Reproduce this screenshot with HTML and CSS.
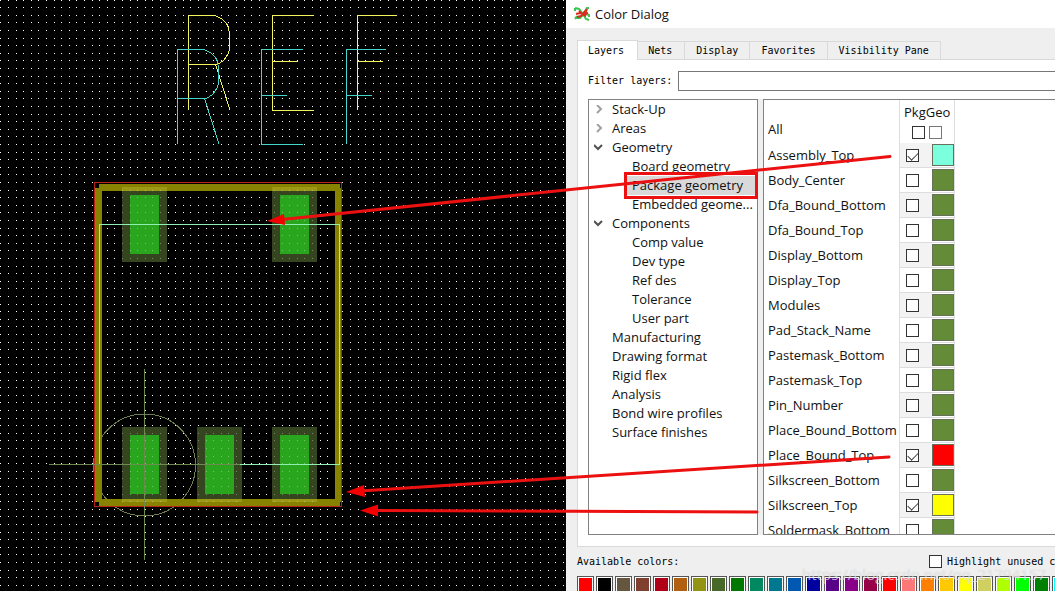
FILE: index.html
```
<!DOCTYPE html>
<html lang="en">
<head>
<meta charset="utf-8">
<title>Color Dialog</title>
<link rel="stylesheet" href="styles.css">
</head>
<body>
<main class="workspace">
  <section class="board" aria-label="Package drawing">
    <svg class="drawing" width="566" height="591" shape-rendering="crispEdges">
      <defs>
        <g id="dot-row">
          <path d="M0 0h1v1h-1zM8 0h1v1h-1zM15 0h1v1h-1zM23 0h1v1h-1zM30 0h1v1h-1z"/>
        </g>
        <pattern id="grid" x="8" y="7" width="38" height="38" patternUnits="userSpaceOnUse">
          <g fill="#fff">
            <use href="#dot-row"/><use href="#dot-row" y="8"/><use href="#dot-row" y="15"/><use href="#dot-row" y="23"/><use href="#dot-row" y="31"/>
          </g>
        </pattern>
        <g id="pad">
          <rect width="45" height="75" fill="#35451f"/>
          <rect x="8" y="8" width="29" height="59" fill="#2aa51e"/>
        </g>
        <g id="ref" fill="none">
          <path d="M11.500 95V.5h26l7 3 5 5 2 4 1 7v14l-1 5-5 7-6 4h-29M38.500 49.500l14.500 45.500"/>
          <path d="M137 .5H95.500v95H137M95.500 46.500h25M220 .5h-39.500V95M180.500 46.500h25"/>
        </g>
      </defs>
      <rect width="566" height="591" fill="#000"/>
      <rect width="566" height="591" fill="url(#grid)"/>
      <use href="#ref" x="177" y="15" stroke="#f4f45e"/>
      <use href="#ref" x="166" y="49" stroke="#45d6cb"/>
      <circle cx="144.500" cy="465" r="51" fill="none" stroke="#6f7f50"/>
      <use href="#pad" x="122" y="187"/><use href="#pad" x="272" y="187"/>
      <use href="#pad" x="122" y="427"/><use href="#pad" x="197" y="427"/><use href="#pad" x="272" y="427"/>
      <path d="M99 184h241v7H99zM95 188h7v314h-7zM335 188h7v314h-7zM99 499h241v7H99z" fill="#878200"/>
      <path d="M122 187h45v4h-45zM272 187h45v4h-45zM122 499h45v3h-45zM197 499h45v3h-45zM272 499h45v3h-45z" fill="#9b9816"/>
      <path d="M122 187h45v75h-45zM272 187h45v75h-45zM122 427h45v75h-45zM197 427h45v75h-45zM272 427h45v75h-45z" fill="url(#grid)" opacity=".35"/>
      <rect x="94.500" y="182.500" width="247" height="324" fill="none" stroke="#b82218"/>
      <path d="M49 464.500h191M144.500 369v191" stroke="#6f8a50"/>
      <path d="M99.500 464V224.500h240v240H240" fill="none" stroke="#8ff0b4"/>
    </svg>
  </section>

  <section class="dialog" aria-label="Color Dialog">
    <header class="titlebar">
      <svg class="app-icon" width="16" height="16" viewBox="0 0 16 16" fill="none">
        <path d="M1 2l4 1 4 5 3 5 3 1M1 2v3M1 12h5l3-3 4-7h2M3 10l-2 3M12 8l3 1v2" stroke="#3cc552" stroke-width="2"/>
        <path d="M2 8l4-1 3 1 4-5M3 11l4-1 4-5M5 5l3 3 4 2M13 3l-2 5 3-1" stroke="#dc2a20" stroke-width="2"/>
      </svg>
      <h1>Color Dialog</h1>
    </header>
    <div class="content">
      <div class="tabs" role="tablist">
        <button class="tab selected" role="tab" aria-selected="true">Layers</button>
        <button class="tab" role="tab">Nets</button>
        <button class="tab" role="tab">Display</button>
        <button class="tab" role="tab">Favorites</button>
        <button class="tab" role="tab">Visibility Pane</button>
      </div>
      <div class="panel">
        <div class="filter">
          <label for="filter">Filter layers:</label>
          <input id="filter" type="text">
        </div>
        <div class="panes">
          <ul class="tree">
            <li><button><svg class="arrow" viewBox="0 0 9 9"><path d="M3 0l4 4-4 4"/></svg>Stack-Up</button></li>
            <li><button><svg class="arrow" viewBox="0 0 9 9"><path d="M3 0l4 4-4 4"/></svg>Areas</button></li>
            <li><button><svg class="arrow open" viewBox="0 0 9 9"><path d="M0 2l4 4 4-4"/></svg>Geometry</button>
              <ul>
                <li><button>Board geometry</button></li>
                <li><button class="current">Package geometry</button></li>
                <li><button>Embedded geome...</button></li>
              </ul>
            </li>
            <li><button><svg class="arrow open" viewBox="0 0 9 9"><path d="M0 2l4 4 4-4"/></svg>Components</button>
              <ul>
                <li><button>Comp value</button></li>
                <li><button>Dev type</button></li>
                <li><button>Ref des</button></li>
                <li><button>Tolerance</button></li>
                <li><button>User part</button></li>
              </ul>
            </li>
            <li><button class="leaf">Manufacturing</button></li>
            <li><button class="leaf">Drawing format</button></li>
            <li><button class="leaf">Rigid flex</button></li>
            <li><button class="leaf">Analysis</button></li>
            <li><button class="leaf">Bond wire profiles</button></li>
            <li><button class="leaf">Surface finishes</button></li>
          </ul>
          <div class="layers">
            <table>
              <colgroup><col class="name-col"><col class="tick-col"><col></colgroup>
              <thead>
                <tr><th class="name">All</th>
                  <th class="head" colspan="2"><span>PkgGeo</span>
                    <div class="all"><input type="checkbox" aria-label="All Pkg"><input class="soft" type="checkbox" aria-label="All Geo"></div></th></tr>
              </thead>
              <tbody>
                <tr><td class="name"><label for="l1">Assembly_Top</label></td><td class="tick"><input id="l1" type="checkbox" checked></td><td class="color"><button class="chip aqua" aria-label="Color"></button></td></tr>
                <tr><td class="name"><label for="l2">Body_Center</label></td><td class="tick"><input id="l2" type="checkbox"></td><td class="color"><button class="chip" aria-label="Color"></button></td></tr>
                <tr><td class="name"><label for="l3">Dfa_Bound_Bottom</label></td><td class="tick"><input id="l3" type="checkbox"></td><td class="color"><button class="chip" aria-label="Color"></button></td></tr>
                <tr><td class="name"><label for="l4">Dfa_Bound_Top</label></td><td class="tick"><input id="l4" type="checkbox"></td><td class="color"><button class="chip" aria-label="Color"></button></td></tr>
                <tr><td class="name"><label for="l5">Display_Bottom</label></td><td class="tick"><input id="l5" type="checkbox"></td><td class="color"><button class="chip" aria-label="Color"></button></td></tr>
                <tr><td class="name"><label for="l6">Display_Top</label></td><td class="tick"><input id="l6" type="checkbox"></td><td class="color"><button class="chip" aria-label="Color"></button></td></tr>
                <tr><td class="name"><label for="l7">Modules</label></td><td class="tick"><input id="l7" type="checkbox"></td><td class="color"><button class="chip" aria-label="Color"></button></td></tr>
                <tr><td class="name"><label for="l8">Pad_Stack_Name</label></td><td class="tick"><input id="l8" type="checkbox"></td><td class="color"><button class="chip" aria-label="Color"></button></td></tr>
                <tr><td class="name"><label for="l9">Pastemask_Bottom</label></td><td class="tick"><input id="l9" type="checkbox"></td><td class="color"><button class="chip" aria-label="Color"></button></td></tr>
                <tr><td class="name"><label for="l10">Pastemask_Top</label></td><td class="tick"><input id="l10" type="checkbox"></td><td class="color"><button class="chip" aria-label="Color"></button></td></tr>
                <tr><td class="name"><label for="l11">Pin_Number</label></td><td class="tick"><input id="l11" type="checkbox"></td><td class="color"><button class="chip" aria-label="Color"></button></td></tr>
                <tr><td class="name"><label for="l12">Place_Bound_Bottom</label></td><td class="tick"><input id="l12" type="checkbox"></td><td class="color"><button class="chip" aria-label="Color"></button></td></tr>
                <tr><td class="name"><label for="l13">Place_Bound_Top</label></td><td class="tick"><input id="l13" type="checkbox" checked></td><td class="color"><button class="chip red" aria-label="Color"></button></td></tr>
                <tr><td class="name"><label for="l14">Silkscreen_Bottom</label></td><td class="tick"><input id="l14" type="checkbox"></td><td class="color"><button class="chip" aria-label="Color"></button></td></tr>
                <tr><td class="name"><label for="l15">Silkscreen_Top</label></td><td class="tick"><input id="l15" type="checkbox" checked></td><td class="color"><button class="chip yellow" aria-label="Color"></button></td></tr>
                <tr><td class="name"><label for="l16">Soldermask_Bottom</label></td><td class="tick"><input id="l16" type="checkbox"></td><td class="color"><button class="chip" aria-label="Color"></button></td></tr>
              </tbody>
            </table>
          </div>
        </div>
      </div>
      <div class="available">
        <span>Available colors:</span>
        <span class="highlight"><input id="hl" type="checkbox"><label for="hl">Highlight unused c</label></span>
      </div>
      <div class="palette">
        <button style="background:#ff0000" aria-label="Color 1"></button>
        <button style="background:#000000" aria-label="Color 2"></button>
        <button style="background:#65563f" aria-label="Color 3"></button>
        <button style="background:#7f4030" aria-label="Color 4"></button>
        <button style="background:#b00018" aria-label="Color 5"></button>
        <button style="background:#b06010" aria-label="Color 6"></button>
        <button style="background:#949414" aria-label="Color 7"></button>
        <button style="background:#486828" aria-label="Color 8"></button>
        <button style="background:#007800" aria-label="Color 9"></button>
        <button style="background:#008860" aria-label="Color 10"></button>
        <button style="background:#007890" aria-label="Color 11"></button>
        <button style="background:#0058b0" aria-label="Color 12"></button>
        <button style="background:#0000a0" aria-label="Color 13"></button>
        <button style="background:#580088" aria-label="Color 14"></button>
        <button style="background:#880088" aria-label="Color 15"></button>
        <button style="background:#980048" aria-label="Color 16"></button>
        <button style="background:#ff0000" aria-label="Color 17"></button>
        <button style="background:#ff7878" aria-label="Color 18"></button>
        <button style="background:#ff8000" aria-label="Color 19"></button>
        <button style="background:#ffc800" aria-label="Color 20"></button>
        <button style="background:#ffff00" aria-label="Color 21"></button>
        <button style="background:#d0d060" aria-label="Color 22"></button>
        <button style="background:#b0ff00" aria-label="Color 23"></button>
        <button style="background:#00ff00" aria-label="Color 24"></button>
        <button style="background:#008000" aria-label="Color 25"></button>
        <button style="background:#00ffff" aria-label="Color 26"></button>
      </div>
    </div>
  </section>

  <svg class="annotations" width="1055" height="591" aria-hidden="true">
    <g fill="none" stroke="#ec1010" stroke-width="3" stroke-linecap="round">
      <path d="M282 219.500L890 156.500M360 491L889 457M375 510.500L757 512"/>
      <rect x="625.500" y="173.500" width="131" height="24" stroke-linecap="butt"/>
    </g>
    <path d="M267 221l17-7 1 11zM346 492l18-7 1 12zM360 510.500l18-6v12z" fill="#f40000"/>
  </svg>
  <span class="watermark">https://blog.csdn.net/qq_21794157</span>
</main>
</body>
</html>
```
FILE: styles.css
```
* { box-sizing: border-box; }
body { margin: 0; font: 13px/19px "Open Sans", "Noto Sans", sans-serif; color: #111; }
button, input { font: inherit; color: inherit; margin: 0; padding: 0; }
button { border: 0; background: none; text-align: left; }
ul { list-style: none; margin: 0; padding: 0; }

.workspace { position: relative; display: grid; grid-template-columns: 566px minmax(0, 1fr); height: 100vh; overflow: hidden; }
.board { background: #000; overflow: hidden; }
.drawing { display: block; }

.dialog { display: flex; flex-direction: column; min-height: 0; background: #efefef; }
.titlebar { display: flex; align-items: center; gap: 5px; height: 28px; padding-left: 8px; background: #fff; flex: none; }
.titlebar h1 { margin: 0; font-size: 13px; font-weight: 400; }
.content { display: flex; flex-direction: column; flex: 1; min-height: 0; padding: 12px 0 0 11px; }

.tabs, .filter, .available { font: 10px/16px "DejaVu Sans Mono", "Liberation Mono", monospace; color: #000; }
.tabs { display: flex; align-items: flex-end; flex: none; height: 19px; }
.tab { height: 18px; padding: 0 11px; border: 1px solid #d9d9d9; border-left: 0; border-bottom: 0; white-space: nowrap; }
.tab:nth-child(2) { padding: 0 12px 0 10px; }
.tab.selected { position: relative; height: 20px; margin-bottom: -1px; padding: 0 13px 0 10px; border-left: 1px solid #d9d9d9; background: #fff; }
.panel { display: flex; flex-direction: column; flex: 1; min-height: 0; padding: 11px 0 11px 10px; background: #fff; border: 1px solid #d9d9d9; border-right: 0; }
.filter { display: flex; align-items: center; gap: 6px; flex: none; height: 20px; margin-bottom: 8px; }
.filter input { flex: 1; min-width: 0; height: 20px; border: 1px solid #777; border-right: 0; background: #fff; }
.panes { display: flex; gap: 5px; flex: 1; min-height: 0; background: #efefef; }
.tree { flex: none; width: 170px; border: 1px solid #828282; background: #fff; overflow: hidden; }
.tree ul { padding-left: 37px; }
.tree button { display: flex; align-items: center; width: 100%; height: 19px; padding-left: 5px; white-space: nowrap; }
.tree .leaf { padding-left: 23px; }
.tree ul button { padding-left: 6px; }
.tree .current { background: #d9d9d9; }
.arrow { width: 9px; height: 9px; margin-right: 9px; fill: none; stroke: #a0a0a0; stroke-width: 2; }
.arrow.open { stroke: #505050; }

.layers { flex: 1; min-width: 0; border: 1px solid #828282; border-right: 0; background: #fff; overflow: hidden; }
table { border-collapse: separate; border-spacing: 0; table-layout: fixed; width: 191px; }
.name-col { width: 135px; }
.tick-col { width: 33px; }
th, td { padding: 0; font-weight: 400; text-align: left; }
td { height: 25px; }
th { height: 43px; }
th.name { vertical-align: bottom; padding: 0 0 4px 4px; }
td.name { padding-left: 4px; white-space: nowrap; }
.head { border-left: 1px solid #ddd; border-right: 1px solid #ddd; padding-left: 4px; vertical-align: top; }
.head span { display: block; padding-top: 3px; }
.all { display: flex; gap: 4px; padding: 4px 0 0 8px; }
.tick { border-left: 1px solid #ddd; border-bottom: 1px solid #ddd; padding-left: 6px; }
.color { border-right: 1px solid #ddd; border-bottom: 1px solid #ddd; }
tr:nth-child(odd) .tick { background: #f3f3f3; }
input[type="checkbox"] { appearance: none; display: block; flex: none; width: 13px; height: 13px; border: 1px solid #333; background: #fff; }
input.soft { border-color: #777; }
input:checked::after { content: ""; display: block; width: 9px; height: 5px; margin: 2px 0 0 1px; border: solid #444; border-width: 0 0 1px 1px; transform: rotate(-45deg); }
.chip { display: block; width: 22px; height: 22px; border: 1px solid #66705a; background: #648b38; }
.chip.aqua { background: #7bffdc; }
.chip.red { background: #f00; }
.chip.yellow { background: #ff0; }

.available { display: flex; align-items: center; flex: none; height: 29px; white-space: nowrap; }
.available > span:first-child { flex: none; width: 352px; }
.highlight { display: flex; align-items: center; gap: 5px; }
.palette { display: flex; gap: 2px; flex: none; height: 15px; overflow: hidden; }
.palette button { flex: none; width: 17px; height: 17px; border: 1px solid #555; box-shadow: inset 0 0 0 1px #fff; }

.annotations { position: absolute; left: 0; top: 0; pointer-events: none; }
.watermark { position: absolute; right: 9px; bottom: 7px; font: 15px/20px "Open Sans", sans-serif; color: rgba(255, 255, 255, .6); text-shadow: 0 0 1px rgba(120, 120, 120, .4); pointer-events: none; }
```
